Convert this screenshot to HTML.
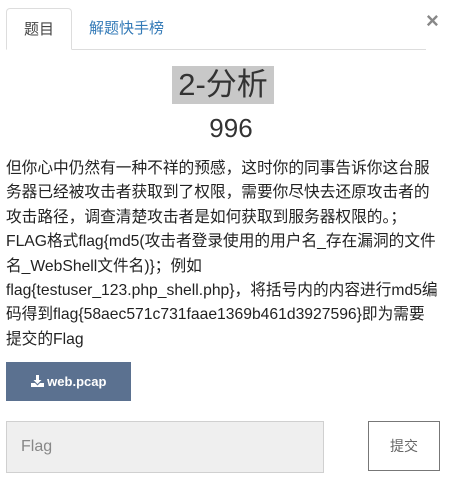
<!DOCTYPE html>
<html><head><meta charset="utf-8"><style>
*{margin:0;padding:0;box-sizing:border-box}
body{width:462px;height:504px;background:#fff;font-family:"Liberation Sans","Noto Sans CJK SC",sans-serif;color:#222;position:relative;overflow:hidden}
.tabline{position:absolute;left:6px;top:49px;width:420px;height:1px;background:#ddd}
.tab1{position:absolute;left:6px;top:8px;width:66px;height:42px;border:1px solid #ddd;border-bottom:1px solid #fff;border-radius:4px 4px 0 0;background:#fff;font-size:15px;color:#444;text-align:center;line-height:42px}
.tab2{position:absolute;left:89px;top:8px;font-size:15px;color:#337ab7;line-height:42px}
.close{position:absolute;left:426px;top:8px;font-size:22px;color:#888;font-weight:bold}
.title{position:absolute;left:172px;top:66px;width:102px;height:38px;background:#c8c8c8;font-size:31px;line-height:38px;text-align:center;color:#333;white-space:nowrap}
.score{position:absolute;left:0;width:462px;top:113px;text-align:center;font-size:26px;color:#333}
.desc{position:absolute;left:6px;top:157px;font-size:15.7px;line-height:24.4px;white-space:nowrap;color:#222}
.btn{position:absolute;left:6px;top:362px;width:125px;height:39px;background:#5b7190;color:#fff;font-size:13px;font-weight:bold;text-align:center;line-height:39px}
.inp{position:absolute;left:6px;top:421px;width:318px;height:52px;background:#efefef;border:1px solid #d0d0d0;font-size:16px;color:#888;padding-left:14px;line-height:50px}
.sub{position:absolute;left:368px;top:421px;width:72px;height:50px;border:1px solid #777;font-size:14px;color:#666;text-align:center;line-height:48px}
</style></head><body>
<div class="tabline"></div>
<div class="tab1">题目</div>
<div class="tab2">解题快手榜</div>
<div class="close">×</div>
<div class="title">2-分析</div>
<div class="score">996</div>
<div class="desc">但你心中仍然有一种不祥的预感，这时你的同事告诉你这台服<br>务器已经被攻击者获取到了权限，需要你尽快去还原攻击者的<br>攻击路径，调查清楚攻击者是如何获取到服务器权限的。；<br>FLAG格式flag{md5(攻击者登录使用的用户名_存在漏洞的文件<br>名_WebShell文件名)}；例如<br>flag{testuser_123.php_shell.php}，将括号内的内容进行md5编<br>码得到flag{58aec571c731faae1369b461d3927596}即为需要<br>提交的Flag</div>
<div class="btn"><svg width="13" height="12" viewBox="0 0 13 12" style="vertical-align:-1px"><path d="M5 0h3v5h2.5L6.5 9 2.5 5H5z" fill="#fff"/><path d="M0 8h4l2.5 2.5L9 8h4v4H0z" fill="#fff"/></svg> web.pcap</div>
<div class="inp">Flag</div>
<div class="sub">提交</div>
</body></html>
